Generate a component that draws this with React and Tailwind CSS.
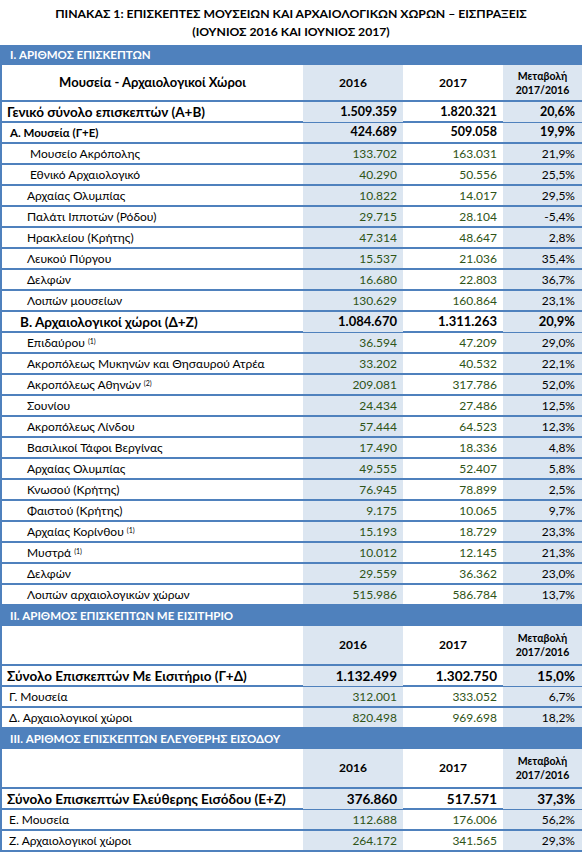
const font = { fontFamily: 'Lato, "Noto Sans", "DejaVu Sans", sans-serif' }

const museums = [
  { label: 'Γενικό σύνολο επισκεπτών (Α+Β)', a: '1.509.359', b: '1.820.321', c: '20,6%', kind: 'grand' },
  { label: 'Α. Μουσεία (Γ+Ε)', a: '424.689', b: '509.058', c: '19,9%', kind: 'groupA' },
  { label: 'Μουσείο Ακρόπολης', a: '133.702', b: '163.031', c: '21,9%', pad: 'pl-[28px]' },
  { label: 'Εθνικό Αρχαιολογικό', a: '40.290', b: '50.556', c: '25,5%', pad: 'pl-[28px]' },
  { label: 'Αρχαίας Ολυμπίας', a: '10.822', b: '14.017', c: '29,5%' },
  { label: 'Παλάτι Ιπποτών (Ρόδου)', a: '29.715', b: '28.104', c: '-5,4%' },
  { label: 'Ηρακλείου (Κρήτης)', a: '47.314', b: '48.647', c: '2,8%' },
  { label: 'Λευκού Πύργου', a: '15.537', b: '21.036', c: '35,4%' },
  { label: 'Δελφών', a: '16.680', b: '22.803', c: '36,7%' },
  { label: 'Λοιπών μουσείων', a: '130.629', b: '160.864', c: '23,1%' },
  { label: 'Β. Αρχαιολογικοί χώροι (Δ+Ζ)', a: '1.084.670', b: '1.311.263', c: '20,9%', kind: 'groupB' },
  { label: 'Επιδαύρου', note: '(1)', a: '36.594', b: '47.209', c: '29,0%' },
  { label: 'Ακροπόλεως Μυκηνών και Θησαυρού Ατρέα', a: '33.202', b: '40.532', c: '22,1%' },
  { label: 'Ακροπόλεως Αθηνών', note: '(2)', a: '209.081', b: '317.786', c: '52,0%' },
  { label: 'Σουνίου', a: '24.434', b: '27.486', c: '12,5%' },
  { label: 'Ακροπόλεως Λίνδου', a: '57.444', b: '64.523', c: '12,3%' },
  { label: 'Βασιλικοί Τάφοι Βεργίνας', a: '17.490', b: '18.336', c: '4,8%' },
  { label: 'Αρχαίας Ολυμπίας', a: '49.555', b: '52.407', c: '5,8%' },
  { label: 'Κνωσού (Κρήτης)', a: '76.945', b: '78.899', c: '2,5%' },
  { label: 'Φαιστού (Κρήτης)', a: '9.175', b: '10.065', c: '9,7%' },
  { label: 'Αρχαίας Κορίνθου', note: '(1)', a: '15.193', b: '18.729', c: '23,3%' },
  { label: 'Μυστρά', note: '(1)', a: '10.012', b: '12.145', c: '21,3%' },
  { label: 'Δελφών', a: '29.559', b: '36.362', c: '23,0%' },
  { label: 'Λοιπών αρχαιολογικών χώρων', a: '515.986', b: '586.784', c: '13,7%' },
]

const ticketed = [
  { label: 'Σύνολο Επισκεπτών Με Εισιτήριο (Γ+Δ)', a: '1.132.499', b: '1.302.750', c: '15,0%', kind: 'total' },
  { label: 'Γ. Μουσεία', a: '312.001', b: '333.052', c: '6,7%', pad: 'pl-[7px]' },
  { label: 'Δ. Αρχαιολογικοί χώροι', a: '820.498', b: '969.698', c: '18,2%', pad: 'pl-[7px]' },
]

const free = [
  { label: 'Σύνολο Επισκεπτών Ελεύθερης Εισόδου (Ε+Ζ)', a: '376.860', b: '517.571', c: '37,3%', kind: 'total' },
  { label: 'Ε. Μουσεία', a: '112.688', b: '176.006', c: '56,2%', pad: 'pl-[7px]' },
  { label: 'Ζ. Αρχαιολογικοί χώροι', a: '264.172', b: '341.565', c: '29,3%', pad: 'pl-[7px]' },
]

const grid = 'grid grid-cols-[301px_100px_100px_1fr]'

function SectionBar({ title }) {
  return (
    <div className="h-[20px] bg-[#4f81bd] pl-[8px] flex items-center text-[11.5px] font-bold text-white">
      {title}
    </div>
  )
}

function HeaderRow({ label, tall }) {
  return (
    <div className={`${grid} ${tall ? 'h-[40px]' : 'h-[37px]'} border-b-2 border-[#4f81bd] font-bold text-black`}>
      <div className="flex items-center justify-center text-[13px]">{label}</div>
      <div className="bg-[#dce6f1] flex items-center justify-center text-[12px]">2016</div>
      <div className="flex items-center justify-center text-[12px]">2017</div>
      <div className="bg-[#dce6f1] flex flex-col items-center justify-center text-[10.5px] leading-[14px]">
        <span>Μεταβολή</span>
        <span>2017/2016</span>
      </div>
    </div>
  )
}

function Row({ r }) {
  let labelCls = 'pl-[25px] text-[12px]'
  let numCls = 'text-[12px] text-[#2f5417]'
  let pctCls = 'text-[12px]'
  if (r.kind === 'grand') {
    labelCls = 'pl-[5px] text-[13.5px] font-bold'
    numCls = pctCls = 'text-[12.5px] font-bold'
  } else if (r.kind === 'groupA') {
    labelCls = 'pl-[8px] text-[11.5px] font-bold'
    numCls = pctCls = 'text-[12.5px] font-bold'
  } else if (r.kind === 'groupB') {
    labelCls = 'pl-[18px] text-[13.5px] font-bold'
    numCls = pctCls = 'text-[13px] font-bold'
  } else if (r.kind === 'total') {
    labelCls = 'pl-[5px] text-[13.5px] font-bold'
    numCls = pctCls = 'text-[13.5px] font-bold'
  } else if (r.pad) {
    labelCls = `${r.pad} text-[12px]`
  }
  return (
    <div className={`${grid} h-[21px] border-b-2 border-[#4f81bd] text-black`}>
      <div className={`flex items-center whitespace-nowrap ${labelCls}`}>
        {r.label}
        {r.note && <sup className="ml-[3px] text-[7px] relative -top-[2px]">{r.note}</sup>}
      </div>
      <div className={`bg-[#dce6f1] flex items-center justify-end pr-[6px] ${numCls}`}>{r.a}</div>
      <div className={`flex items-center justify-end pr-[6px] ${numCls}`}>{r.b}</div>
      <div className={`bg-[#dce6f1] flex items-center justify-end pr-[7px] ${pctCls}`}>{r.c}</div>
    </div>
  )
}

export default function App() {
  return (
    <div className="w-[582px] h-[855px] bg-white overflow-hidden" style={font}>
      <div className="h-[45px] flex flex-col items-center justify-center text-[12.2px] font-bold leading-[18px] text-black">
        <p>ΠΙΝΑΚΑΣ 1: ΕΠΙΣΚΕΠΤΕΣ ΜΟΥΣΕΙΩΝ ΚΑΙ ΑΡΧΑΙΟΛΟΓΙΚΩΝ ΧΩΡΩΝ – ΕΙΣΠΡΑΞΕΙΣ</p>
        <p>(ΙΟΥΝΙΟΣ 2016 ΚΑΙ ΙΟΥΝΙΟΣ 2017)</p>
      </div>

      <div className="border-l-2 border-[#4f81bd]">
        <SectionBar title="I. ΑΡΙΘΜΟΣ ΕΠΙΣΚΕΠΤΩΝ" />
        <HeaderRow label="Μουσεία - Αρχαιολογικοί Χώροι" />
        {museums.map((r, i) => <Row key={i} r={r} />)}

        <SectionBar title="II. ΑΡΙΘΜΟΣ ΕΠΙΣΚΕΠΤΩΝ ΜΕ ΕΙΣΙΤΗΡΙΟ" />
        <HeaderRow label="" tall />
        {ticketed.map((r, i) => <Row key={i} r={r} />)}

        <SectionBar title="III. ΑΡΙΘΜΟΣ ΕΠΙΣΚΕΠΤΩΝ ΕΛΕΥΘΕΡΗΣ ΕΙΣΟΔΟΥ" />
        <HeaderRow label="" tall />
        {free.map((r, i) => <Row key={i} r={r} />)}
      </div>
    </div>
  )
}
